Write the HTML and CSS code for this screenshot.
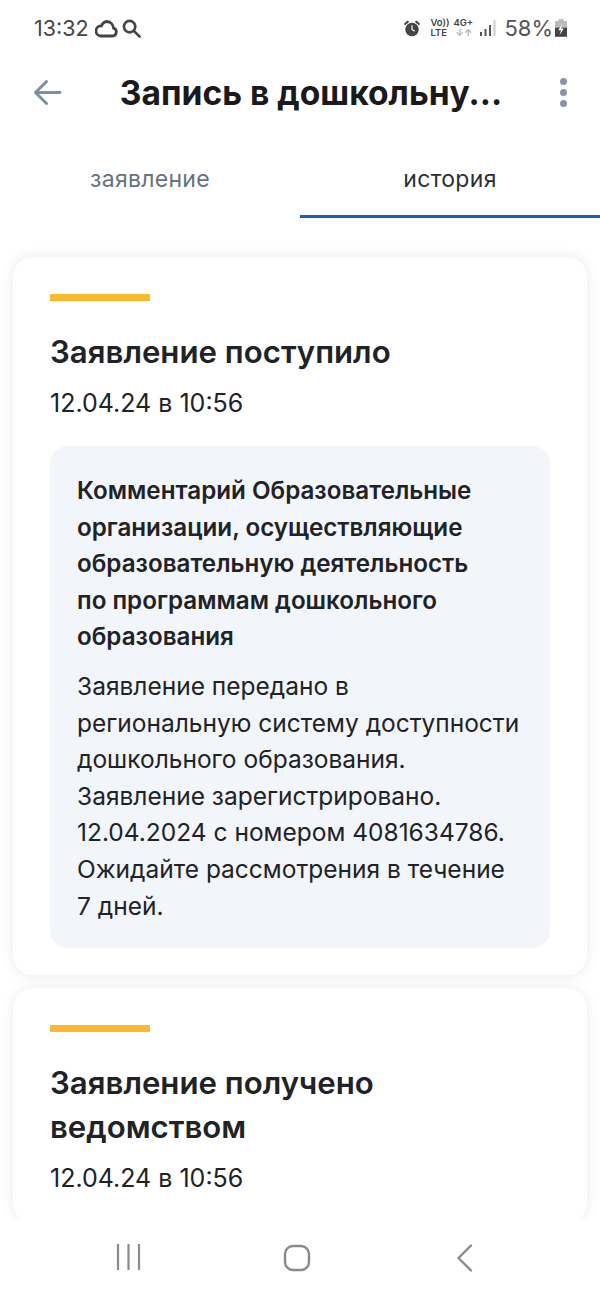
FILE: index.html
```html
<!DOCTYPE html>
<html lang="ru">

<head>
  <meta charset="UTF-8">
  <meta name="viewport" content="width=device-width, initial-scale=1.0">
  <title>Запись в дошкольное</title>
  <link rel="stylesheet" href="styles.css">
</head>

<body>
  <div class="screen">
    <!-- status bar -->
    <div class="status-bar">
      <div class="status-left">
        <span class="status-time">13:32</span>
        <svg class="status-cloud" width="23" height="19" viewBox="0 0 23 19" fill="none" stroke="#444" stroke-width="2.800" stroke-linejoin="round">
          <path d="M5.500 17h12a4 4 0 0 0 1-7.800A7 7 0 0 0 12 2.500 6.500 6.500 0 0 0 6.500 7 5 5 0 0 0 5.500 17z" />
        </svg>
        <svg class="status-search" width="19" height="19" viewBox="0 0 20 20" fill="none" stroke="#444" stroke-width="2.800" stroke-linecap="round">
          <circle cx="8" cy="8" r="6" />
          <path d="M12.500 12.500l6 6" />
        </svg>
      </div>
      <div class="status-right">
        <svg class="status-alarm" width="18" height="19" viewBox="0 0 20 20" fill="#444">
          <circle cx="10" cy="11" r="7.500" />
          <path d="M1 5l4-4 2 1.500-4.500 4zM19 5l-4-4-2 1.500 4.500 4z" />
          <path d="M10 6.500V11l3 2" fill="none" stroke="#fff" stroke-width="1.300" />
        </svg>
        <div class="net-label net-volte">
          <span>Vo))</span>
          <span>LTE</span>
        </div>
        <div class="net-label net-4g">
          <span>4G+</span>
          <span class="net-arrows">↓↑</span>
        </div>
        <svg class="status-signal" width="16" height="16" viewBox="0 0 16 16" fill="#555">
          <rect x="0" y="12" width="2" height="4" />
          <rect x="4.500" y="9" width="2" height="7" />
          <rect x="9" y="5" width="2" height="11" />
          <rect x="13.500" y="0" width="2" height="16" fill="#ccc" />
        </svg>
        <span class="status-battery">58%</span>
        <svg width="12" height="18" viewBox="0 0 13 19">
          <rect x="3.500" y="0" width="6" height="3" fill="#bbb" />
          <rect x="0" y="2" width="13" height="7" fill="#bbb" />
          <rect x="0" y="9" width="13" height="10" fill="#444" />
          <path d="M8 5L3.500 12h3L5 17l4.500-7h-3z" fill="#fff" />
        </svg>
      </div>
    </div>

    <!-- header -->
    <div class="header">
      <svg class="header-back" width="29" height="27" viewBox="0 0 30 28" fill="none" stroke="#7d8ea3" stroke-width="3" stroke-linecap="round" stroke-linejoin="round">
        <path d="M28 14H3M14 2.500L2.500 14 14 25.500" />
      </svg>
      <h1 class="header-title">Запись в дошкольну...</h1>
      <div class="header-menu">
        <span></span>
        <span></span>
        <span></span>
      </div>
    </div>

    <!-- tabs -->
    <div class="tabs">
      <div class="tab">заявление</div>
      <div class="tab tab-active">история</div>
    </div>

    <div class="content">
      <div class="card">
        <div class="card-mark"></div>
        <h2 class="card-title">Заявление поступило</h2>
        <p class="card-date">12.04.24 в 10:56</p>
        <div class="comment">
          <p class="comment-title">Комментарий Образовательные<br>организации, осуществляющие<br>образовательную деятельность<br>по программам дошкольного<br>образования</p>
          <p class="comment-text">Заявление передано в<br>региональную систему доступности<br>дошкольного образования.<br>Заявление зарегистрировано.<br>12.04.2024 с номером 4081634786.<br>Ожидайте рассмотрения в течение<br>7 дней.</p>
        </div>
      </div>

      <div class="card">
        <div class="card-mark"></div>
        <h2 class="card-title">Заявление получено<br>ведомством</h2>
        <p class="card-date">12.04.24 в 10:56</p>
      </div>
    </div>

    <!-- system navigation -->
    <div class="nav-bar">
      <svg width="28" height="26" viewBox="0 0 28 26" fill="none" stroke="#8a8a8a" stroke-width="2.200">
        <path d="M3 0v26M13.500 0v26M24 0v26" />
      </svg>
      <svg class="nav-home" width="28" height="28" viewBox="0 0 28 28" fill="none" stroke="#8a8a8a" stroke-width="2.400">
        <rect x="2" y="2" width="24" height="24" rx="8" />
      </svg>
      <svg width="18" height="28" viewBox="0 0 18 28" fill="none" stroke="#8a8a8a" stroke-width="2.400" stroke-linecap="round" stroke-linejoin="round">
        <path d="M15 1.500L2.500 14 15 26.500" />
      </svg>
    </div>
  </div>
</body>

</html>
```

FILE: styles.css
```css
* {
  margin: 0;
  padding: 0;
  box-sizing: border-box;
}

body {
  font-family: Inter, "Noto Sans", sans-serif;
  background-color: #fff;
}

.screen {
  width: 600px;
  height: 1299px;
  display: flex;
  flex-direction: column;
  overflow: hidden;
}

.status-bar {
  height: 56px;
  flex-shrink: 0;
  display: flex;
  align-items: center;
  justify-content: space-between;
  padding: 0 33px 0 34px;
}

.status-left {
  display: flex;
  align-items: center;
}

.status-time {
  font-size: 21.500px;
  color: #444;
  margin-right: 6px;
}

.status-search {
  margin-left: 4px;
}

.status-right {
  display: flex;
  align-items: center;
}

.net-label {
  display: flex;
  flex-direction: column;
  font-size: 9.500px;
  line-height: 10px;
  font-weight: 600;
  color: #444;
  white-space: nowrap;
}

.net-volte {
  width: 19px;
  margin-left: 9px;
}

.net-4g {
  width: 21px;
  margin-left: 4px;
}

.net-arrows {
  color: #aaa;
  text-align: center;
}

.status-signal {
  margin-left: 6px;
}

.status-battery {
  font-size: 22px;
  color: #555;
  margin-left: 8px;
  margin-right: 2px;
}

.header {
  height: 72px;
  flex-shrink: 0;
  display: flex;
  align-items: center;
  padding: 0 33px;
}

.header-back {
  flex-shrink: 0;
}

.header-title {
  flex: 1;
  text-align: center;
  font-size: 33.600px;
  font-weight: 700;
  color: #1a1a1c;
  white-space: nowrap;
}

.header-menu {
  display: flex;
  flex-direction: column;
  gap: 4px;
}

.header-menu span {
  width: 7px;
  height: 7px;
  border-radius: 50%;
  background-color: #8a93a6;
}

.tabs {
  display: flex;
  flex-shrink: 0;
  height: 90px;
}

.tab {
  width: 300px;
  height: 90px;
  padding-top: 36px;
  text-align: center;
  font-size: 23px;
  line-height: 30px;
  letter-spacing: 0.300px;
  color: #66727f;
}

.tab-active {
  color: #2b2f36;
  border-bottom: 3px solid #1f5bb0;
}

.content {
  flex: 1;
  min-height: 0;
  overflow: hidden;
  padding: 39px 13px 0;
  display: flex;
  flex-direction: column;
  gap: 13px;
}

.card {
  flex-shrink: 0;
  background-color: #fff;
  border-radius: 20px;
  padding: 37px 37px 27px;
  box-shadow: 0 0 14px rgba(0, 0, 0, 0.09);
}

.card-mark {
  width: 100px;
  height: 7px;
  background-color: #fdb92e;
  margin-bottom: 29px;
}

.card-title {
  font-size: 31.200px;
  line-height: 44px;
  font-weight: 600;
  color: #212226;
}

.card-date {
  margin-top: 11px;
  font-size: 25px;
  line-height: 36px;
  color: #212226;
}

.comment {
  margin-top: 25px;
  padding: 27px 27px 24px;
  background-color: #f2f5fa;
  border-radius: 18px;
  line-height: 36.600px;
  color: #212226;
  white-space: nowrap;
}

.comment-title {
  font-size: 24.200px;
  font-weight: 600;
  margin-bottom: 12px;
}

.comment-text {
  font-size: 24.500px;
}

.nav-bar {
  height: 80px;
  flex-shrink: 0;
  background-color: #fff;
  display: flex;
  align-items: flex-start;
  justify-content: space-between;
  padding: 25px 126px 0 115px;
}

.nav-home {
  margin-left: -6px;
}
```
